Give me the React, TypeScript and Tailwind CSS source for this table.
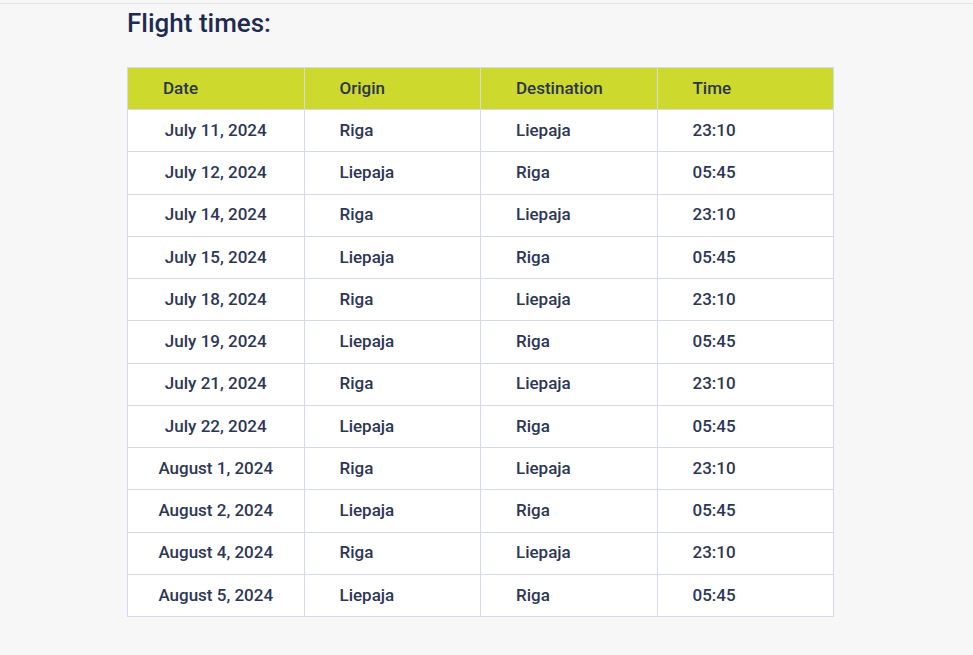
import React from 'react';

const flights = [
  ['July 11, 2024', 'Riga', 'Liepaja', '23:10'],
  ['July 12, 2024', 'Liepaja', 'Riga', '05:45'],
  ['July 14, 2024', 'Riga', 'Liepaja', '23:10'],
  ['July 15, 2024', 'Liepaja', 'Riga', '05:45'],
  ['July 18, 2024', 'Riga', 'Liepaja', '23:10'],
  ['July 19, 2024', 'Liepaja', 'Riga', '05:45'],
  ['July 21, 2024', 'Riga', 'Liepaja', '23:10'],
  ['July 22, 2024', 'Liepaja', 'Riga', '05:45'],
  ['August 1, 2024', 'Riga', 'Liepaja', '23:10'],
  ['August 2, 2024', 'Liepaja', 'Riga', '05:45'],
  ['August 4, 2024', 'Riga', 'Liepaja', '23:10'],
  ['August 5, 2024', 'Liepaja', 'Riga', '05:45'],
];

const headers = ['Date', 'Origin', 'Destination', 'Time'];

export default function App() {
  return (
    <div
      className="min-h-[655px] bg-[#f7f7f8] pt-[3px]"
      style={{ fontFamily: 'Roboto, "Liberation Sans", sans-serif' }}
    >
      <div className="border-t border-[#e2e4ea] pl-[127px]">
        <h2 className="mt-[3px] text-[26px] font-medium leading-[32px] text-[#1e2b4f]">
          Flight times:
        </h2>
        <table className="mt-[28px] w-[707px] table-fixed border-collapse text-[17px] font-medium text-[#2d3654]">
          <thead>
            <tr className="h-[42px] bg-[#cdd92d]">
              {headers.map((h) => (
                <th
                  key={h}
                  className="border border-[#d6d9e8] pl-[35px] text-left font-medium text-[#2b3550]"
                >
                  {h}
                </th>
              ))}
            </tr>
          </thead>
          <tbody>
            {flights.map((row) => (
              <tr key={row[0]} className="h-[42.25px] bg-white">
                {row.map((cell, i) => (
                  <td
                    key={i}
                    className={
                      i === 0
                        ? 'border border-[#d6d9e8] text-center'
                        : 'border border-[#d6d9e8] pl-[35px] text-left'
                    }
                  >
                    {cell}
                  </td>
                ))}
              </tr>
            ))}
          </tbody>
        </table>
      </div>
    </div>
  );
}
